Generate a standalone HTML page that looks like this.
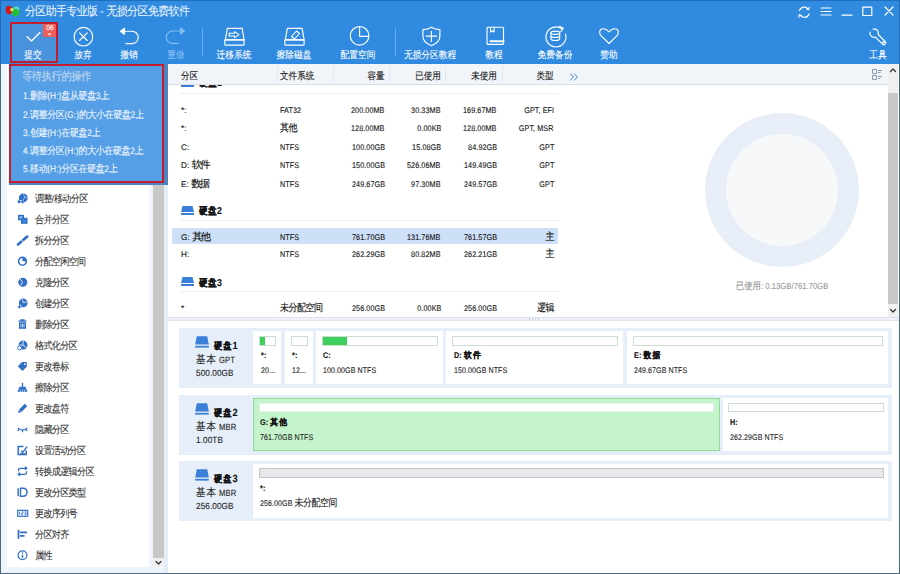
<!DOCTYPE html><html><head><meta charset="utf-8"><style>
*{margin:0;padding:0;box-sizing:border-box}
html,body{width:900px;height:574px;overflow:hidden;background:#e9f2fb;font-family:"Liberation Sans",sans-serif;position:relative}
.a{position:absolute}
.t{position:absolute;height:0;white-space:nowrap;line-height:0;text-rendering:geometricPrecision}
.t span{line-height:0}
:root{--k:1;--w:0.75;--s:1;--v:1}
.c{font-size:calc(var(--F) * var(--k));letter-spacing:calc(var(--A) - var(--F) * var(--k) * var(--w));-webkit-text-stroke:calc(var(--S) * var(--s)) currentColor;vertical-align:calc(var(--D) * var(--v))}
</style></head><body><div class="a" style="left:0px;top:0px;width:900px;height:64px;background:#2f8ae0;"></div>
<div class="a" style="left:0px;top:0px;width:900px;height:1px;background:#1f6fc0;"></div>
<svg class="a" style="left:0;top:0" width="24" height="20" viewBox="0 0 24 20"><ellipse cx="9" cy="10" rx="3.3" ry="4.2" fill="#d01818"/><ellipse cx="15.6" cy="11.4" rx="4" ry="5" fill="#22c03c"/><ellipse cx="16.3" cy="9" rx="3" ry="2.6" fill="#5fd8e8"/><ellipse cx="15.6" cy="12.5" rx="3.6" ry="3.8" fill="#22bf3c"/><circle cx="11.8" cy="9.6" r="1.7" fill="#e8e070"/></svg>
<div class="t" style="left:25px;transform-origin:0 0;top:10.48px;font-size:43.50px;color:#eaf3fd;transform:scale(0.3000,0.3333);"><span class="c" style="--F:43.50px;--A:34.50px;--S:0.90px;--D:-3.00px">分区助手专业版</span><span style="font-size:33.00px;letter-spacing:0.30px;-webkit-text-stroke:0.30px #eaf3fd"> - </span><span class="c" style="--F:43.50px;--A:34.50px;--S:0.90px;--D:-3.00px">无损分区免费软件</span></div>
<div class="a" style="left:9.5px;top:21.5px;width:48.8px;height:41px;background:#4893dc;"></div>
<div class="a" style="left:43px;top:24px;width:13px;height:13px;background:#ef5d5b;"></div>
<div class="t" style="left:-250.5px;width:600px;text-align:center;transform-origin:50% 0;top:26.24px;font-size:36.90px;color:#fff;transform:scale(0.3000,0.3333);"><span style="font-size:22.50px;letter-spacing:0.30px;-webkit-text-stroke:0.30px #fff">06</span></div>
<div class="t" style="left:-267px;width:600px;text-align:center;transform-origin:50% 0;top:53.91px;font-size:35.40px;color:#ffffff;transform:scale(0.2933,0.3333);"><span class="c" style="--F:35.40px;--A:29.66px;--S:1.05px;--D:-3.00px">提交</span></div>
<div class="t" style="left:-217.4px;width:600px;text-align:center;transform-origin:50% 0;top:53.91px;font-size:35.40px;color:#ffffff;transform:scale(0.2933,0.3333);"><span class="c" style="--F:35.40px;--A:29.66px;--S:1.05px;--D:-3.00px">放弃</span></div>
<div class="t" style="left:-171px;width:600px;text-align:center;transform-origin:50% 0;top:53.91px;font-size:35.40px;color:#ffffff;transform:scale(0.2933,0.3333);"><span class="c" style="--F:35.40px;--A:29.66px;--S:1.05px;--D:-3.00px">撤销</span></div>
<div class="t" style="left:-124.5px;width:600px;text-align:center;transform-origin:50% 0;top:53.91px;font-size:35.40px;color:#86bdf0;transform:scale(0.2933,0.3333);"><span class="c" style="--F:35.40px;--A:29.66px;--S:1.05px;--D:-3.00px">重做</span></div>
<div class="t" style="left:-66px;width:600px;text-align:center;transform-origin:50% 0;top:53.91px;font-size:35.40px;color:#ffffff;transform:scale(0.2933,0.3333);"><span class="c" style="--F:35.40px;--A:29.66px;--S:1.05px;--D:-3.00px">迁移系统</span></div>
<div class="t" style="left:-6px;width:600px;text-align:center;transform-origin:50% 0;top:53.91px;font-size:35.40px;color:#ffffff;transform:scale(0.2933,0.3333);"><span class="c" style="--F:35.40px;--A:29.66px;--S:1.05px;--D:-3.00px">擦除磁盘</span></div>
<div class="t" style="left:58px;width:600px;text-align:center;transform-origin:50% 0;top:53.91px;font-size:35.40px;color:#ffffff;transform:scale(0.2933,0.3333);"><span class="c" style="--F:35.40px;--A:29.66px;--S:1.05px;--D:-3.00px">配置空间</span></div>
<div class="t" style="left:130.39999999999998px;width:600px;text-align:center;transform-origin:50% 0;top:53.91px;font-size:35.40px;color:#ffffff;transform:scale(0.2933,0.3333);"><span class="c" style="--F:35.40px;--A:29.66px;--S:1.05px;--D:-3.00px">无损分区教程</span></div>
<div class="t" style="left:194px;width:600px;text-align:center;transform-origin:50% 0;top:53.91px;font-size:35.40px;color:#ffffff;transform:scale(0.2933,0.3333);"><span class="c" style="--F:35.40px;--A:29.66px;--S:1.05px;--D:-3.00px">教程</span></div>
<div class="t" style="left:254.89999999999998px;width:600px;text-align:center;transform-origin:50% 0;top:53.91px;font-size:35.40px;color:#ffffff;transform:scale(0.2933,0.3333);"><span class="c" style="--F:35.40px;--A:29.66px;--S:1.05px;--D:-3.00px">免费备份</span></div>
<div class="t" style="left:308.70000000000005px;width:600px;text-align:center;transform-origin:50% 0;top:53.91px;font-size:35.40px;color:#ffffff;transform:scale(0.2933,0.3333);"><span class="c" style="--F:35.40px;--A:29.66px;--S:1.05px;--D:-3.00px">赞助</span></div>
<div class="t" style="left:577.5px;width:600px;text-align:center;transform-origin:50% 0;top:53.91px;font-size:35.40px;color:#ffffff;transform:scale(0.2933,0.3333);"><span class="c" style="--F:35.40px;--A:29.66px;--S:1.05px;--D:-3.00px">工具</span></div>
<div class="a" style="left:202px;top:28px;width:1px;height:28px;background:#6aaeea;"></div>
<div class="a" style="left:395px;top:28px;width:1px;height:28px;background:#6aaeea;"></div>
<div class="a" style="left:1px;top:64px;width:163px;height:509px;background:#eef5fc;"></div>
<div class="a" style="left:7px;top:64px;width:142px;height:503px;background:#ffffff;"></div>
<div class="a" style="left:152px;top:64px;width:12px;height:503px;background:#f0f0f0;"></div>
<div class="a" style="left:153px;top:184px;width:11px;height:374px;background:#c8c8c8;"></div>
<div class="a" style="left:164px;top:64px;width:4px;height:509px;background:#e4eef9;"></div>
<div class="t" style="left:35px;transform-origin:0 0;top:197.90px;font-size:37.20px;color:#333;transform:scale(0.2933,0.3333);"><span class="c" style="--F:37.20px;--A:28.64px;--S:0.90px;--D:-0.90px">调整</span><span style="font-size:25.50px;letter-spacing:0.30px;-webkit-text-stroke:0.30px #333">/</span><span class="c" style="--F:37.20px;--A:28.64px;--S:0.90px;--D:-0.90px">移动分区</span></div>
<div class="t" style="left:35px;transform-origin:0 0;top:218.90px;font-size:37.20px;color:#333;transform:scale(0.2933,0.3333);"><span class="c" style="--F:37.20px;--A:28.64px;--S:0.90px;--D:-0.90px">合并分区</span></div>
<div class="t" style="left:35px;transform-origin:0 0;top:239.90px;font-size:37.20px;color:#333;transform:scale(0.2933,0.3333);"><span class="c" style="--F:37.20px;--A:28.64px;--S:0.90px;--D:-0.90px">拆分分区</span></div>
<div class="t" style="left:35px;transform-origin:0 0;top:260.90px;font-size:37.20px;color:#333;transform:scale(0.2933,0.3333);"><span class="c" style="--F:37.20px;--A:28.64px;--S:0.90px;--D:-0.90px">分配空闲空间</span></div>
<div class="t" style="left:35px;transform-origin:0 0;top:281.90px;font-size:37.20px;color:#333;transform:scale(0.2933,0.3333);"><span class="c" style="--F:37.20px;--A:28.64px;--S:0.90px;--D:-0.90px">克隆分区</span></div>
<div class="t" style="left:35px;transform-origin:0 0;top:302.90px;font-size:37.20px;color:#333;transform:scale(0.2933,0.3333);"><span class="c" style="--F:37.20px;--A:28.64px;--S:0.90px;--D:-0.90px">创建分区</span></div>
<div class="t" style="left:35px;transform-origin:0 0;top:323.90px;font-size:37.20px;color:#333;transform:scale(0.2933,0.3333);"><span class="c" style="--F:37.20px;--A:28.64px;--S:0.90px;--D:-0.90px">删除分区</span></div>
<div class="t" style="left:35px;transform-origin:0 0;top:344.90px;font-size:37.20px;color:#333;transform:scale(0.2933,0.3333);"><span class="c" style="--F:37.20px;--A:28.64px;--S:0.90px;--D:-0.90px">格式化分区</span></div>
<div class="t" style="left:35px;transform-origin:0 0;top:365.90px;font-size:37.20px;color:#333;transform:scale(0.2933,0.3333);"><span class="c" style="--F:37.20px;--A:28.64px;--S:0.90px;--D:-0.90px">更改卷标</span></div>
<div class="t" style="left:35px;transform-origin:0 0;top:386.90px;font-size:37.20px;color:#333;transform:scale(0.2933,0.3333);"><span class="c" style="--F:37.20px;--A:28.64px;--S:0.90px;--D:-0.90px">擦除分区</span></div>
<div class="t" style="left:35px;transform-origin:0 0;top:407.90px;font-size:37.20px;color:#333;transform:scale(0.2933,0.3333);"><span class="c" style="--F:37.20px;--A:28.64px;--S:0.90px;--D:-0.90px">更改盘符</span></div>
<div class="t" style="left:35px;transform-origin:0 0;top:428.90px;font-size:37.20px;color:#333;transform:scale(0.2933,0.3333);"><span class="c" style="--F:37.20px;--A:28.64px;--S:0.90px;--D:-0.90px">隐藏分区</span></div>
<div class="t" style="left:35px;transform-origin:0 0;top:449.90px;font-size:37.20px;color:#333;transform:scale(0.2933,0.3333);"><span class="c" style="--F:37.20px;--A:28.64px;--S:0.90px;--D:-0.90px">设置活动分区</span></div>
<div class="t" style="left:35px;transform-origin:0 0;top:470.90px;font-size:37.20px;color:#333;transform:scale(0.2933,0.3333);"><span class="c" style="--F:37.20px;--A:28.64px;--S:0.90px;--D:-0.90px">转换成逻辑分区</span></div>
<div class="t" style="left:35px;transform-origin:0 0;top:491.90px;font-size:37.20px;color:#333;transform:scale(0.2933,0.3333);"><span class="c" style="--F:37.20px;--A:28.64px;--S:0.90px;--D:-0.90px">更改分区类型</span></div>
<div class="t" style="left:35px;transform-origin:0 0;top:512.90px;font-size:37.20px;color:#333;transform:scale(0.2933,0.3333);"><span class="c" style="--F:37.20px;--A:28.64px;--S:0.90px;--D:-0.90px">更改序列号</span></div>
<div class="t" style="left:35px;transform-origin:0 0;top:533.90px;font-size:37.20px;color:#333;transform:scale(0.2933,0.3333);"><span class="c" style="--F:37.20px;--A:28.64px;--S:0.90px;--D:-0.90px">分区对齐</span></div>
<div class="t" style="left:35px;transform-origin:0 0;top:554.90px;font-size:37.20px;color:#333;transform:scale(0.2933,0.3333);"><span class="c" style="--F:37.20px;--A:28.64px;--S:0.90px;--D:-0.90px">属性</span></div>
<div class="a" style="left:168px;top:64px;width:731px;height:509px;background:#ffffff;"></div>
<div class="a" style="left:168px;top:64px;width:720px;height:20px;background:#f1f5fa;"></div>
<div class="a" style="left:168px;top:84px;width:720px;height:1px;background:#d8dfe8;"></div>
<div class="a" style="left:277px;top:66px;width:1px;height:17px;background:#e2e8f0;"></div>
<div class="a" style="left:333px;top:66px;width:1px;height:17px;background:#e2e8f0;"></div>
<div class="a" style="left:389px;top:66px;width:1px;height:17px;background:#e2e8f0;"></div>
<div class="a" style="left:445px;top:66px;width:1px;height:17px;background:#e2e8f0;"></div>
<div class="a" style="left:502px;top:66px;width:1px;height:17px;background:#e2e8f0;"></div>
<div class="t" style="left:181px;transform-origin:0 0;top:74.58px;font-size:34.80px;color:#222;transform:scale(0.2933,0.3333);"><span class="c" style="--F:34.80px;--A:29.32px;--S:1.35px;--D:0.00px">分区</span></div>
<div class="t" style="left:280px;transform-origin:0 0;top:74.58px;font-size:34.80px;color:#222;transform:scale(0.2933,0.3333);"><span class="c" style="--F:34.80px;--A:29.32px;--S:1.35px;--D:0.00px">文件系统</span></div>
<div class="t" style="right:515px;text-align:right;transform-origin:100% 0;top:74.58px;font-size:34.80px;color:#222;transform:scale(0.2933,0.3333);"><span class="c" style="--F:34.80px;--A:29.32px;--S:1.35px;--D:0.00px">容量</span></div>
<div class="t" style="right:459px;text-align:right;transform-origin:100% 0;top:74.58px;font-size:34.80px;color:#222;transform:scale(0.2933,0.3333);"><span class="c" style="--F:34.80px;--A:29.32px;--S:1.35px;--D:0.00px">已使用</span></div>
<div class="t" style="right:403px;text-align:right;transform-origin:100% 0;top:74.58px;font-size:34.80px;color:#222;transform:scale(0.2933,0.3333);"><span class="c" style="--F:34.80px;--A:29.32px;--S:1.35px;--D:0.00px">未使用</span></div>
<div class="t" style="right:346px;text-align:right;transform-origin:100% 0;top:74.58px;font-size:34.80px;color:#222;transform:scale(0.2933,0.3333);"><span class="c" style="--F:34.80px;--A:29.32px;--S:1.35px;--D:0.00px">类型</span></div>
<div class="a" style="left:888px;top:64px;width:10px;height:253px;background:#f0f0f0;"></div>
<div class="a" style="left:888px;top:93px;width:10px;height:211px;background:#c8c8c8;"></div>
<div class="a" style="left:168px;top:85px;width:720px;height:232px;overflow:hidden">
<div class="a" style="left:4px;top:143px;width:386px;height:16px;background:#cde0f7;"></div>
<div class="t" style="left:13px;transform-origin:0 0;top:23.84px;font-size:36.90px;color:#111;transform:scale(0.3333,0.3333);"><span style="font-size:24.60px;letter-spacing:0.30px;-webkit-text-stroke:0.30px #111">*:</span></div>
<div class="t" style="left:112px;transform-origin:0 0;top:23.84px;font-size:36.90px;color:#111;transform:scale(0.2933,0.3333);"><span style="font-size:24.60px;letter-spacing:0.30px;-webkit-text-stroke:0.30px #111">FAT32</span></div>
<div class="t" style="right:503px;text-align:right;transform-origin:100% 0;top:23.84px;font-size:36.90px;color:#111;transform:scale(0.2933,0.3333);"><span style="font-size:24.60px;letter-spacing:0.30px;-webkit-text-stroke:0.30px #111">200.00MB</span></div>
<div class="t" style="right:447px;text-align:right;transform-origin:100% 0;top:23.84px;font-size:36.90px;color:#111;transform:scale(0.2933,0.3333);"><span style="font-size:24.60px;letter-spacing:0.30px;-webkit-text-stroke:0.30px #111">30.33MB</span></div>
<div class="t" style="right:391px;text-align:right;transform-origin:100% 0;top:23.84px;font-size:36.90px;color:#111;transform:scale(0.2933,0.3333);"><span style="font-size:24.60px;letter-spacing:0.30px;-webkit-text-stroke:0.30px #111">169.67MB</span></div>
<div class="t" style="right:334px;text-align:right;transform-origin:100% 0;top:23.84px;font-size:36.90px;color:#111;transform:scale(0.2933,0.3333);"><span style="font-size:24.60px;letter-spacing:0.30px;-webkit-text-stroke:0.30px #111">GPT, EFI</span></div>
<div class="t" style="left:13px;transform-origin:0 0;top:42.24px;font-size:36.90px;color:#111;transform:scale(0.3333,0.3333);"><span style="font-size:24.60px;letter-spacing:0.30px;-webkit-text-stroke:0.30px #111">*:</span></div>
<div class="t" style="left:112px;transform-origin:0 0;top:42.24px;font-size:36.90px;color:#111;transform:scale(0.2933,0.3333);"><span class="c" style="--F:36.90px;--A:28.98px;--S:1.35px;--D:-6.90px">其他</span></div>
<div class="t" style="right:503px;text-align:right;transform-origin:100% 0;top:42.24px;font-size:36.90px;color:#111;transform:scale(0.2933,0.3333);"><span style="font-size:24.60px;letter-spacing:0.30px;-webkit-text-stroke:0.30px #111">128.00MB</span></div>
<div class="t" style="right:447px;text-align:right;transform-origin:100% 0;top:42.24px;font-size:36.90px;color:#111;transform:scale(0.2933,0.3333);"><span style="font-size:24.60px;letter-spacing:0.30px;-webkit-text-stroke:0.30px #111">0.00KB</span></div>
<div class="t" style="right:391px;text-align:right;transform-origin:100% 0;top:42.24px;font-size:36.90px;color:#111;transform:scale(0.2933,0.3333);"><span style="font-size:24.60px;letter-spacing:0.30px;-webkit-text-stroke:0.30px #111">128.00MB</span></div>
<div class="t" style="right:334px;text-align:right;transform-origin:100% 0;top:42.24px;font-size:36.90px;color:#111;transform:scale(0.2933,0.3333);"><span style="font-size:24.60px;letter-spacing:0.30px;-webkit-text-stroke:0.30px #111">GPT, MSR</span></div>
<div class="t" style="left:13px;transform-origin:0 0;top:60.74px;font-size:36.90px;color:#111;transform:scale(0.3333,0.3333);"><span style="font-size:24.60px;letter-spacing:0.30px;-webkit-text-stroke:0.30px #111">C:</span></div>
<div class="t" style="left:112px;transform-origin:0 0;top:60.74px;font-size:36.90px;color:#111;transform:scale(0.2933,0.3333);"><span style="font-size:24.60px;letter-spacing:0.30px;-webkit-text-stroke:0.30px #111">NTFS</span></div>
<div class="t" style="right:503px;text-align:right;transform-origin:100% 0;top:60.74px;font-size:36.90px;color:#111;transform:scale(0.2933,0.3333);"><span style="font-size:24.60px;letter-spacing:0.30px;-webkit-text-stroke:0.30px #111">100.00GB</span></div>
<div class="t" style="right:447px;text-align:right;transform-origin:100% 0;top:60.74px;font-size:36.90px;color:#111;transform:scale(0.2933,0.3333);"><span style="font-size:24.60px;letter-spacing:0.30px;-webkit-text-stroke:0.30px #111">15.08GB</span></div>
<div class="t" style="right:391px;text-align:right;transform-origin:100% 0;top:60.74px;font-size:36.90px;color:#111;transform:scale(0.2933,0.3333);"><span style="font-size:24.60px;letter-spacing:0.30px;-webkit-text-stroke:0.30px #111">84.92GB</span></div>
<div class="t" style="right:334px;text-align:right;transform-origin:100% 0;top:60.74px;font-size:36.90px;color:#111;transform:scale(0.2933,0.3333);"><span style="font-size:24.60px;letter-spacing:0.30px;-webkit-text-stroke:0.30px #111">GPT</span></div>
<div class="t" style="left:13px;transform-origin:0 0;top:79.14px;font-size:36.90px;color:#111;transform:scale(0.3333,0.3333);"><span style="font-size:24.60px;letter-spacing:0.30px;-webkit-text-stroke:0.30px #111">D: </span><span class="c" style="--F:36.90px;--A:25.50px;--S:1.35px;--D:-6.90px">软件</span></div>
<div class="t" style="left:112px;transform-origin:0 0;top:79.14px;font-size:36.90px;color:#111;transform:scale(0.2933,0.3333);"><span style="font-size:24.60px;letter-spacing:0.30px;-webkit-text-stroke:0.30px #111">NTFS</span></div>
<div class="t" style="right:503px;text-align:right;transform-origin:100% 0;top:79.14px;font-size:36.90px;color:#111;transform:scale(0.2933,0.3333);"><span style="font-size:24.60px;letter-spacing:0.30px;-webkit-text-stroke:0.30px #111">150.00GB</span></div>
<div class="t" style="right:447px;text-align:right;transform-origin:100% 0;top:79.14px;font-size:36.90px;color:#111;transform:scale(0.2933,0.3333);"><span style="font-size:24.60px;letter-spacing:0.30px;-webkit-text-stroke:0.30px #111">526.06MB</span></div>
<div class="t" style="right:391px;text-align:right;transform-origin:100% 0;top:79.14px;font-size:36.90px;color:#111;transform:scale(0.2933,0.3333);"><span style="font-size:24.60px;letter-spacing:0.30px;-webkit-text-stroke:0.30px #111">149.49GB</span></div>
<div class="t" style="right:334px;text-align:right;transform-origin:100% 0;top:79.14px;font-size:36.90px;color:#111;transform:scale(0.2933,0.3333);"><span style="font-size:24.60px;letter-spacing:0.30px;-webkit-text-stroke:0.30px #111">GPT</span></div>
<div class="t" style="left:13px;transform-origin:0 0;top:97.64px;font-size:36.90px;color:#111;transform:scale(0.3333,0.3333);"><span style="font-size:24.60px;letter-spacing:0.30px;-webkit-text-stroke:0.30px #111">E: </span><span class="c" style="--F:36.90px;--A:25.50px;--S:1.35px;--D:-6.90px">数据</span></div>
<div class="t" style="left:112px;transform-origin:0 0;top:97.64px;font-size:36.90px;color:#111;transform:scale(0.2933,0.3333);"><span style="font-size:24.60px;letter-spacing:0.30px;-webkit-text-stroke:0.30px #111">NTFS</span></div>
<div class="t" style="right:503px;text-align:right;transform-origin:100% 0;top:97.64px;font-size:36.90px;color:#111;transform:scale(0.2933,0.3333);"><span style="font-size:24.60px;letter-spacing:0.30px;-webkit-text-stroke:0.30px #111">249.67GB</span></div>
<div class="t" style="right:447px;text-align:right;transform-origin:100% 0;top:97.64px;font-size:36.90px;color:#111;transform:scale(0.2933,0.3333);"><span style="font-size:24.60px;letter-spacing:0.30px;-webkit-text-stroke:0.30px #111">97.30MB</span></div>
<div class="t" style="right:391px;text-align:right;transform-origin:100% 0;top:97.64px;font-size:36.90px;color:#111;transform:scale(0.2933,0.3333);"><span style="font-size:24.60px;letter-spacing:0.30px;-webkit-text-stroke:0.30px #111">249.57GB</span></div>
<div class="t" style="right:334px;text-align:right;transform-origin:100% 0;top:97.64px;font-size:36.90px;color:#111;transform:scale(0.2933,0.3333);"><span style="font-size:24.60px;letter-spacing:0.30px;-webkit-text-stroke:0.30px #111">GPT</span></div>
<div class="t" style="left:13px;transform-origin:0 0;top:150.74px;font-size:36.90px;color:#111;transform:scale(0.3333,0.3333);"><span style="font-size:24.60px;letter-spacing:0.30px;-webkit-text-stroke:0.30px #111">G: </span><span class="c" style="--F:36.90px;--A:25.50px;--S:1.35px;--D:-6.90px">其他</span></div>
<div class="t" style="left:112px;transform-origin:0 0;top:150.74px;font-size:36.90px;color:#111;transform:scale(0.2933,0.3333);"><span style="font-size:24.60px;letter-spacing:0.30px;-webkit-text-stroke:0.30px #111">NTFS</span></div>
<div class="t" style="right:503px;text-align:right;transform-origin:100% 0;top:150.74px;font-size:36.90px;color:#111;transform:scale(0.2933,0.3333);"><span style="font-size:24.60px;letter-spacing:0.30px;-webkit-text-stroke:0.30px #111">761.70GB</span></div>
<div class="t" style="right:447px;text-align:right;transform-origin:100% 0;top:150.74px;font-size:36.90px;color:#111;transform:scale(0.2933,0.3333);"><span style="font-size:24.60px;letter-spacing:0.30px;-webkit-text-stroke:0.30px #111">131.76MB</span></div>
<div class="t" style="right:391px;text-align:right;transform-origin:100% 0;top:150.74px;font-size:36.90px;color:#111;transform:scale(0.2933,0.3333);"><span style="font-size:24.60px;letter-spacing:0.30px;-webkit-text-stroke:0.30px #111">761.57GB</span></div>
<div class="t" style="right:334px;text-align:right;transform-origin:100% 0;top:150.74px;font-size:36.90px;color:#111;transform:scale(0.2933,0.3333);"><span class="c" style="--F:36.90px;--A:28.98px;--S:1.35px;--D:-6.90px">主</span></div>
<div class="t" style="left:13px;transform-origin:0 0;top:168.24px;font-size:36.90px;color:#111;transform:scale(0.3333,0.3333);"><span style="font-size:24.60px;letter-spacing:0.30px;-webkit-text-stroke:0.30px #111">H:</span></div>
<div class="t" style="left:112px;transform-origin:0 0;top:168.24px;font-size:36.90px;color:#111;transform:scale(0.2933,0.3333);"><span style="font-size:24.60px;letter-spacing:0.30px;-webkit-text-stroke:0.30px #111">NTFS</span></div>
<div class="t" style="right:503px;text-align:right;transform-origin:100% 0;top:168.24px;font-size:36.90px;color:#111;transform:scale(0.2933,0.3333);"><span style="font-size:24.60px;letter-spacing:0.30px;-webkit-text-stroke:0.30px #111">262.29GB</span></div>
<div class="t" style="right:447px;text-align:right;transform-origin:100% 0;top:168.24px;font-size:36.90px;color:#111;transform:scale(0.2933,0.3333);"><span style="font-size:24.60px;letter-spacing:0.30px;-webkit-text-stroke:0.30px #111">80.82MB</span></div>
<div class="t" style="right:391px;text-align:right;transform-origin:100% 0;top:168.24px;font-size:36.90px;color:#111;transform:scale(0.2933,0.3333);"><span style="font-size:24.60px;letter-spacing:0.30px;-webkit-text-stroke:0.30px #111">262.21GB</span></div>
<div class="t" style="right:334px;text-align:right;transform-origin:100% 0;top:168.24px;font-size:36.90px;color:#111;transform:scale(0.2933,0.3333);"><span class="c" style="--F:36.90px;--A:28.98px;--S:1.35px;--D:-6.90px">主</span></div>
<div class="t" style="left:13px;transform-origin:0 0;top:222.24px;font-size:36.90px;color:#111;transform:scale(0.3333,0.3333);"><span style="font-size:24.60px;letter-spacing:0.30px;-webkit-text-stroke:0.30px #111">*</span></div>
<div class="t" style="left:112px;transform-origin:0 0;top:222.24px;font-size:36.90px;color:#111;transform:scale(0.2933,0.3333);"><span class="c" style="--F:36.90px;--A:28.98px;--S:1.35px;--D:-6.90px">未分配空间</span></div>
<div class="t" style="right:503px;text-align:right;transform-origin:100% 0;top:222.24px;font-size:36.90px;color:#111;transform:scale(0.2933,0.3333);"><span style="font-size:24.60px;letter-spacing:0.30px;-webkit-text-stroke:0.30px #111">256.00GB</span></div>
<div class="t" style="right:447px;text-align:right;transform-origin:100% 0;top:222.24px;font-size:36.90px;color:#111;transform:scale(0.2933,0.3333);"><span style="font-size:24.60px;letter-spacing:0.30px;-webkit-text-stroke:0.30px #111">0.00KB</span></div>
<div class="t" style="right:391px;text-align:right;transform-origin:100% 0;top:222.24px;font-size:36.90px;color:#111;transform:scale(0.2933,0.3333);"><span style="font-size:24.60px;letter-spacing:0.30px;-webkit-text-stroke:0.30px #111">256.00GB</span></div>
<div class="t" style="right:334px;text-align:right;transform-origin:100% 0;top:222.24px;font-size:36.90px;color:#111;transform:scale(0.2933,0.3333);"><span class="c" style="--F:36.90px;--A:28.98px;--S:1.35px;--D:-6.90px">逻辑</span></div>
<svg class="a" style="left:13px;top:-7.5px" width="13" height="9" viewBox="0 0 13 9"><path d="M1.5,0 h10 l1.5,6 h-13 z" fill="#3b80d8"/><rect x="0" y="7" width="13" height="2" fill="#3b80d8"/></svg>
<div class="t" style="left:31px;transform-origin:0 0;top:-2.79px;font-size:35.40px;color:#111;transform:scale(0.2933,0.3333);font-weight:bold;"><span class="c" style="--F:35.40px;--A:30.68px;--S:3.00px;--D:-3.00px">硬盘</span><span style="font-size:30.00px;letter-spacing:0.30px;-webkit-text-stroke:0.30px #111">1</span></div>
<svg class="a" style="left:13px;top:120.5px" width="13" height="9" viewBox="0 0 13 9"><path d="M1.5,0 h10 l1.5,6 h-13 z" fill="#3b80d8"/><rect x="0" y="7" width="13" height="2" fill="#3b80d8"/></svg>
<div class="t" style="left:31px;transform-origin:0 0;top:125.21px;font-size:35.40px;color:#111;transform:scale(0.2933,0.3333);font-weight:bold;"><span class="c" style="--F:35.40px;--A:30.68px;--S:3.00px;--D:-3.00px">硬盘</span><span style="font-size:30.00px;letter-spacing:0.30px;-webkit-text-stroke:0.30px #111">2</span></div>
<svg class="a" style="left:13px;top:192.0px" width="13" height="9" viewBox="0 0 13 9"><path d="M1.5,0 h10 l1.5,6 h-13 z" fill="#3b80d8"/><rect x="0" y="7" width="13" height="2" fill="#3b80d8"/></svg>
<div class="t" style="left:31px;transform-origin:0 0;top:196.71px;font-size:35.40px;color:#111;transform:scale(0.2933,0.3333);font-weight:bold;"><span class="c" style="--F:35.40px;--A:30.68px;--S:3.00px;--D:-3.00px">硬盘</span><span style="font-size:30.00px;letter-spacing:0.30px;-webkit-text-stroke:0.30px #111">3</span></div>
<div class="a" style="left:12px;top:8px;width:378px;height:1px;background:#eceef2;"></div>
<div class="a" style="left:12px;top:135px;width:378px;height:1px;background:#eceef2;"></div>
<div class="a" style="left:12px;top:206px;width:378px;height:1px;background:#eceef2;"></div>
</div>
<div class="a" style="left:705px;top:113px;width:154px;height:154px;border-radius:50%;background:#e8eef8"></div>
<div class="a" style="left:726px;top:134px;width:112px;height:112px;border-radius:50%;background:#f7f8fa"></div>
<div class="t" style="left:736px;transform-origin:0 0;top:285.02px;font-size:34.50px;color:#999;transform:scale(0.2867,0.3333);"><span class="c" style="--F:34.50px;--A:28.95px;--S:1.35px;--D:-3.00px">已使用</span><span style="font-size:26.40px;letter-spacing:0.30px;-webkit-text-stroke:0.30px #999">: 0.13GB/761.70GB</span></div>
<div class="a" style="left:168px;top:317px;width:731px;height:4px;background:#eef1f5;border-top:1px solid #dde3ea;border-bottom:1px solid #dde3ea"></div>
<div class="a" style="left:179px;top:328px;width:713px;height:60px;background:#e6eef9;"></div>
<div class="a" style="left:179px;top:395px;width:713px;height:60px;background:#e6eef9;"></div>
<div class="a" style="left:179px;top:461px;width:713px;height:60px;background:#e6eef9;"></div>
<div class="a" style="left:253px;top:331px;width:28px;height:53px;background:#fff;"></div>
<div class="a" style="left:259px;top:336px;width:17px;height:10px;background:#fff;border:1px solid #cddfcf"></div>
<div class="a" style="left:260px;top:337px;width:5px;height:8px;background:#3fcf5e;"></div>
<div class="a" style="left:285px;top:331px;width:28px;height:53px;background:#fff;"></div>
<div class="a" style="left:291px;top:336px;width:17px;height:10px;background:#fff;border:1px solid #cddfcf"></div>
<div class="a" style="left:316px;top:331px;width:127px;height:53px;background:#fff;"></div>
<div class="a" style="left:322px;top:336px;width:116px;height:10px;background:#fff;border:1px solid #cddfcf"></div>
<div class="a" style="left:323px;top:337px;width:24px;height:8px;background:#3fcf5e;"></div>
<div class="a" style="left:446px;top:331px;width:177px;height:53px;background:#fff;"></div>
<div class="a" style="left:452px;top:336px;width:166px;height:10px;background:#fff;border:1px solid #cddfcf"></div>
<div class="a" style="left:627px;top:331px;width:261px;height:53px;background:#fff;"></div>
<div class="a" style="left:633px;top:336px;width:250px;height:10px;background:#fff;border:1px solid #cddfcf"></div>
<div class="t" style="left:260.5px;transform-origin:0 0;top:353.76px;font-size:31.50px;color:#111;transform:scale(0.2933,0.3333);font-weight:bold;"><span style="font-size:24.60px;letter-spacing:0.30px;-webkit-text-stroke:0.30px #111">*:</span></div>
<div class="t" style="left:260.5px;transform-origin:0 0;top:368.54px;font-size:36.90px;color:#222;transform:scale(0.2867,0.3333);"><span style="font-size:24.60px;letter-spacing:0.30px;-webkit-text-stroke:0.30px #222">20...</span></div>
<div class="t" style="left:291.5px;transform-origin:0 0;top:353.76px;font-size:31.50px;color:#111;transform:scale(0.2933,0.3333);font-weight:bold;"><span style="font-size:24.60px;letter-spacing:0.30px;-webkit-text-stroke:0.30px #111">*:</span></div>
<div class="t" style="left:291.5px;transform-origin:0 0;top:368.54px;font-size:36.90px;color:#222;transform:scale(0.2867,0.3333);"><span style="font-size:24.60px;letter-spacing:0.30px;-webkit-text-stroke:0.30px #222">12...</span></div>
<div class="t" style="left:323px;transform-origin:0 0;top:353.76px;font-size:31.50px;color:#111;transform:scale(0.2933,0.3333);font-weight:bold;"><span style="font-size:24.60px;letter-spacing:0.30px;-webkit-text-stroke:0.30px #111">C:</span></div>
<div class="t" style="left:323px;transform-origin:0 0;top:368.54px;font-size:36.90px;color:#222;transform:scale(0.2867,0.3333);"><span style="font-size:24.60px;letter-spacing:0.30px;-webkit-text-stroke:0.30px #222">100.00GB NTFS</span></div>
<div class="t" style="left:453.7px;transform-origin:0 0;top:353.76px;font-size:31.50px;color:#111;transform:scale(0.2933,0.3333);font-weight:bold;"><span style="font-size:24.60px;letter-spacing:0.30px;-webkit-text-stroke:0.30px #111">D: </span><span class="c" style="--F:31.50px;--A:30.68px;--S:3.00px;--D:-3.60px">软件</span></div>
<div class="t" style="left:453.7px;transform-origin:0 0;top:368.54px;font-size:36.90px;color:#222;transform:scale(0.2867,0.3333);"><span style="font-size:24.60px;letter-spacing:0.30px;-webkit-text-stroke:0.30px #222">150.00GB NTFS</span></div>
<div class="t" style="left:634px;transform-origin:0 0;top:353.76px;font-size:31.50px;color:#111;transform:scale(0.2933,0.3333);font-weight:bold;"><span style="font-size:24.60px;letter-spacing:0.30px;-webkit-text-stroke:0.30px #111">E: </span><span class="c" style="--F:31.50px;--A:30.68px;--S:3.00px;--D:-3.60px">数据</span></div>
<div class="t" style="left:634px;transform-origin:0 0;top:368.54px;font-size:36.90px;color:#222;transform:scale(0.2867,0.3333);"><span style="font-size:24.60px;letter-spacing:0.30px;-webkit-text-stroke:0.30px #222">249.67GB NTFS</span></div>
<div class="a" style="left:253px;top:398px;width:467px;height:53px;background:#c5f3cb;border:1px solid #8fd99b;"></div>
<div class="a" style="left:259px;top:403px;width:455px;height:9px;background:#fff;border:1px solid #e4f4e6"></div>
<div class="a" style="left:723px;top:398px;width:165px;height:53px;background:#fff;"></div>
<div class="a" style="left:728px;top:403px;width:156px;height:9px;background:#fff;border:1px solid #cddfcf"></div>
<div class="t" style="left:260px;transform-origin:0 0;top:420.76px;font-size:31.50px;color:#111;transform:scale(0.2933,0.3333);font-weight:bold;"><span style="font-size:24.60px;letter-spacing:0.30px;-webkit-text-stroke:0.30px #111">G: </span><span class="c" style="--F:31.50px;--A:30.68px;--S:3.00px;--D:-3.60px">其他</span></div>
<div class="t" style="left:260px;transform-origin:0 0;top:435.54px;font-size:36.90px;color:#222;transform:scale(0.2867,0.3333);"><span style="font-size:24.60px;letter-spacing:0.30px;-webkit-text-stroke:0.30px #222">761.70GB NTFS</span></div>
<div class="t" style="left:730px;transform-origin:0 0;top:420.76px;font-size:31.50px;color:#111;transform:scale(0.2933,0.3333);font-weight:bold;"><span style="font-size:24.60px;letter-spacing:0.30px;-webkit-text-stroke:0.30px #111">H:</span></div>
<div class="t" style="left:730px;transform-origin:0 0;top:435.54px;font-size:36.90px;color:#222;transform:scale(0.2867,0.3333);"><span style="font-size:24.60px;letter-spacing:0.30px;-webkit-text-stroke:0.30px #222">262.29GB NTFS</span></div>
<div class="a" style="left:253px;top:464px;width:635px;height:54px;background:#fff;"></div>
<div class="a" style="left:259px;top:468px;width:625px;height:10px;background:#e6e8eb;border:1px solid #c3c6ca"></div>
<div class="t" style="left:260px;transform-origin:0 0;top:486.76px;font-size:31.50px;color:#111;transform:scale(0.2933,0.3333);font-weight:bold;"><span style="font-size:24.60px;letter-spacing:0.30px;-webkit-text-stroke:0.30px #111">*:</span></div>
<div class="t" style="left:260px;transform-origin:0 0;top:501.54px;font-size:36.90px;color:#222;transform:scale(0.2867,0.3333);"><span style="font-size:24.60px;letter-spacing:0.30px;-webkit-text-stroke:0.30px #222">256.00GB </span><span class="c" style="--F:36.90px;--A:29.65px;--S:1.35px;--D:-3.00px">未分配空间</span></div>
<svg class="a" style="left:195px;top:336px" width="14" height="12" viewBox="0 0 14 12"><path d="M1.8,0.3 h10.4 l1.6,8.2 h-13.6 z" fill="#3b80d8"/><rect x="0.2" y="9.8" width="13.6" height="1.8" fill="#3b80d8"/></svg>
<div class="t" style="left:214.4px;transform-origin:0 0;top:344.92px;font-size:33.60px;color:#111;transform:scale(0.2933,0.3333);font-weight:bold;"><span class="c" style="--F:33.60px;--A:31.70px;--S:3.15px;--D:-0.90px">硬盘</span><span style="font-size:31.50px;letter-spacing:0.30px;-webkit-text-stroke:0.30px #111">1</span></div>
<div class="t" style="left:196px;transform-origin:0 0;top:359.33px;font-size:39.60px;color:#222;transform:scale(0.2833,0.3333);"><span class="c" style="--F:39.60px;--A:36.71px;--S:1.35px;--D:0.00px">基本</span><span style="font-size:27.00px;letter-spacing:0.30px;-webkit-text-stroke:0.30px #222"> GPT</span></div>
<div class="t" style="left:196px;transform-origin:0 0;top:371.54px;font-size:36.90px;color:#222;transform:scale(0.3033,0.3333);"><span style="font-size:27.00px;letter-spacing:0.30px;-webkit-text-stroke:0.30px #222">500.00GB</span></div>
<svg class="a" style="left:195px;top:403px" width="14" height="12" viewBox="0 0 14 12"><path d="M1.8,0.3 h10.4 l1.6,8.2 h-13.6 z" fill="#3b80d8"/><rect x="0.2" y="9.8" width="13.6" height="1.8" fill="#3b80d8"/></svg>
<div class="t" style="left:214.4px;transform-origin:0 0;top:411.92px;font-size:33.60px;color:#111;transform:scale(0.2933,0.3333);font-weight:bold;"><span class="c" style="--F:33.60px;--A:31.70px;--S:3.15px;--D:-0.90px">硬盘</span><span style="font-size:31.50px;letter-spacing:0.30px;-webkit-text-stroke:0.30px #111">2</span></div>
<div class="t" style="left:196px;transform-origin:0 0;top:426.33px;font-size:39.60px;color:#222;transform:scale(0.2833,0.3333);"><span class="c" style="--F:39.60px;--A:36.71px;--S:1.35px;--D:0.00px">基本</span><span style="font-size:27.00px;letter-spacing:0.30px;-webkit-text-stroke:0.30px #222"> MBR</span></div>
<div class="t" style="left:196px;transform-origin:0 0;top:438.54px;font-size:36.90px;color:#222;transform:scale(0.3033,0.3333);"><span style="font-size:27.00px;letter-spacing:0.30px;-webkit-text-stroke:0.30px #222">1.00TB</span></div>
<svg class="a" style="left:195px;top:469px" width="14" height="12" viewBox="0 0 14 12"><path d="M1.8,0.3 h10.4 l1.6,8.2 h-13.6 z" fill="#3b80d8"/><rect x="0.2" y="9.8" width="13.6" height="1.8" fill="#3b80d8"/></svg>
<div class="t" style="left:214.4px;transform-origin:0 0;top:477.92px;font-size:33.60px;color:#111;transform:scale(0.2933,0.3333);font-weight:bold;"><span class="c" style="--F:33.60px;--A:31.70px;--S:3.15px;--D:-0.90px">硬盘</span><span style="font-size:31.50px;letter-spacing:0.30px;-webkit-text-stroke:0.30px #111">3</span></div>
<div class="t" style="left:196px;transform-origin:0 0;top:492.33px;font-size:39.60px;color:#222;transform:scale(0.2833,0.3333);"><span class="c" style="--F:39.60px;--A:36.71px;--S:1.35px;--D:0.00px">基本</span><span style="font-size:27.00px;letter-spacing:0.30px;-webkit-text-stroke:0.30px #222"> MBR</span></div>
<div class="t" style="left:196px;transform-origin:0 0;top:504.54px;font-size:36.90px;color:#222;transform:scale(0.3033,0.3333);"><span style="font-size:27.00px;letter-spacing:0.30px;-webkit-text-stroke:0.30px #222">256.00GB</span></div>
<div class="a" style="left:9px;top:64px;width:159px;height:121px;background:#4f83bd;"></div>
<div class="a" style="left:9px;top:64px;width:155px;height:119px;background:#559fe6;border:2.8px solid #c41d2d"></div>
<div class="t" style="left:22px;transform-origin:0 0;top:74.58px;font-size:41.70px;color:#c5d9ef;transform:scale(0.2933,0.3333);"><span class="c" style="--F:41.70px;--A:33.58px;--S:0.90px;--D:-3.00px">等待执行的操作</span></div>
<div class="t" style="left:22.6px;transform-origin:0 0;top:95.24px;font-size:36.90px;color:#f2f7fd;transform:scale(0.2867,0.3333);"><span style="font-size:28.80px;letter-spacing:0.30px;-webkit-text-stroke:0.30px #f2f7fd">1.</span><span class="c" style="--F:36.90px;--A:30.00px;--S:1.05px;--D:-3.00px">删除</span><span style="font-size:28.80px;letter-spacing:0.30px;-webkit-text-stroke:0.30px #f2f7fd">(H:)</span><span class="c" style="--F:36.90px;--A:30.00px;--S:1.05px;--D:-3.00px">盘从硬盘</span><span style="font-size:28.80px;letter-spacing:0.30px;-webkit-text-stroke:0.30px #f2f7fd">3</span><span class="c" style="--F:36.90px;--A:30.00px;--S:1.05px;--D:-3.00px">上</span></div>
<div class="t" style="left:22.6px;transform-origin:0 0;top:113.54px;font-size:36.90px;color:#f2f7fd;transform:scale(0.2867,0.3333);"><span style="font-size:28.80px;letter-spacing:0.30px;-webkit-text-stroke:0.30px #f2f7fd">2.</span><span class="c" style="--F:36.90px;--A:30.00px;--S:1.05px;--D:-3.00px">调整分区</span><span style="font-size:28.80px;letter-spacing:0.30px;-webkit-text-stroke:0.30px #f2f7fd">(G:)</span><span class="c" style="--F:36.90px;--A:30.00px;--S:1.05px;--D:-3.00px">的大小在硬盘</span><span style="font-size:28.80px;letter-spacing:0.30px;-webkit-text-stroke:0.30px #f2f7fd">2</span><span class="c" style="--F:36.90px;--A:30.00px;--S:1.05px;--D:-3.00px">上</span></div>
<div class="t" style="left:22.6px;transform-origin:0 0;top:131.84px;font-size:36.90px;color:#f2f7fd;transform:scale(0.2867,0.3333);"><span style="font-size:28.80px;letter-spacing:0.30px;-webkit-text-stroke:0.30px #f2f7fd">3.</span><span class="c" style="--F:36.90px;--A:30.00px;--S:1.05px;--D:-3.00px">创建</span><span style="font-size:28.80px;letter-spacing:0.30px;-webkit-text-stroke:0.30px #f2f7fd">(H:)</span><span class="c" style="--F:36.90px;--A:30.00px;--S:1.05px;--D:-3.00px">在硬盘</span><span style="font-size:28.80px;letter-spacing:0.30px;-webkit-text-stroke:0.30px #f2f7fd">2</span><span class="c" style="--F:36.90px;--A:30.00px;--S:1.05px;--D:-3.00px">上</span></div>
<div class="t" style="left:22.6px;transform-origin:0 0;top:150.14px;font-size:36.90px;color:#f2f7fd;transform:scale(0.2867,0.3333);"><span style="font-size:28.80px;letter-spacing:0.30px;-webkit-text-stroke:0.30px #f2f7fd">4.</span><span class="c" style="--F:36.90px;--A:30.00px;--S:1.05px;--D:-3.00px">调整分区</span><span style="font-size:28.80px;letter-spacing:0.30px;-webkit-text-stroke:0.30px #f2f7fd">(H:)</span><span class="c" style="--F:36.90px;--A:30.00px;--S:1.05px;--D:-3.00px">的大小在硬盘</span><span style="font-size:28.80px;letter-spacing:0.30px;-webkit-text-stroke:0.30px #f2f7fd">2</span><span class="c" style="--F:36.90px;--A:30.00px;--S:1.05px;--D:-3.00px">上</span></div>
<div class="t" style="left:22.6px;transform-origin:0 0;top:168.44px;font-size:36.90px;color:#f2f7fd;transform:scale(0.2867,0.3333);"><span style="font-size:28.80px;letter-spacing:0.30px;-webkit-text-stroke:0.30px #f2f7fd">5.</span><span class="c" style="--F:36.90px;--A:30.00px;--S:1.05px;--D:-3.00px">移动</span><span style="font-size:28.80px;letter-spacing:0.30px;-webkit-text-stroke:0.30px #f2f7fd">(H:)</span><span class="c" style="--F:36.90px;--A:30.00px;--S:1.05px;--D:-3.00px">分区在硬盘</span><span style="font-size:28.80px;letter-spacing:0.30px;-webkit-text-stroke:0.30px #f2f7fd">2</span><span class="c" style="--F:36.90px;--A:30.00px;--S:1.05px;--D:-3.00px">上</span></div>
<svg class="a" style="left:0;top:0" width="900" height="574"><g transform="translate(17,193.3)"><circle cx="6.3" cy="4.6" r="4.4" fill="#2f6fc6"/><path d="M6,0.5 l2,3 l-2.5,4 M8,3.5 l2.5,1.5" stroke="#a8d0f5" stroke-width="0.8" fill="none"/><path d="M0.5,8.3 h6.5" stroke="#fff" stroke-width="3"/><path d="M0.8,8.3 h6 M0.8,8.3 l1.7,-1.7 M0.8,8.3 l1.7,1.7 M6.8,8.3 l-1.7,-1.7 M6.8,8.3 l-1.7,1.7" stroke="#2f6fc6" stroke-width="1.3" fill="none"/></g><g transform="translate(17,214.3)"><rect x="1" y="0.5" width="6" height="5.5" fill="#2f6fc6"/><rect x="2.5" y="2" width="3" height="2.5" fill="#9cc0ec"/><rect x="4" y="3.5" width="6.5" height="6" fill="#2f6fc6"/><rect x="5.5" y="5" width="3.5" height="3" fill="#3f86dc"/></g><g transform="translate(17,235.3)"><path d="M1,9.2 L10.3,1.3" stroke="#2f6fc6" stroke-width="2.6" stroke-linecap="round"/><path d="M4.3,4.2 L7,7.4" stroke="#fff" stroke-width="0.9"/></g><g transform="translate(17,256.3)"><circle cx="5.5" cy="5" r="3.9" fill="none" stroke="#2f6fc6" stroke-width="1.6"/><path d="M5.5,1.1 v3.9 h3.9 a3.9,3.9 0 0 0 -3.9,-3.9 z" fill="#2f6fc6"/></g><g transform="translate(17,277.3)"><circle cx="5.8" cy="5" r="4.5" fill="#2f6fc6"/><path d="M3,1.5 l2.5,3.5 l-2,3" stroke="#fff" stroke-width="0.9" fill="none"/></g><g transform="translate(17,298.3)"><circle cx="6.2" cy="4.6" r="4.3" fill="#2f6fc6"/><path d="M5,1 l1.5,3.5 l3,-1" stroke="#fff" stroke-width="0.8" fill="none"/><path d="M2.5,6.5 v4 M0.5,8.5 h4" stroke="#fff" stroke-width="2.4"/><path d="M2.5,6.8 v3.4 M0.8,8.5 h3.4" stroke="#2f6fc6" stroke-width="1.2"/></g><g transform="translate(17,319.3)"><path d="M1.5,1.8 h8 M4,1.8 v-1.2 h3 v1.2" stroke="#2f6fc6" stroke-width="1.2" fill="none"/><rect x="2" y="3" width="7" height="6.5" fill="#2f6fc6"/><path d="M4,4.5 v3.5 M5.5,4.5 v3.5 M7,4.5 v3.5" stroke="#fff" stroke-width="0.7"/></g><g transform="translate(17,340.3)"><circle cx="6" cy="4.8" r="4.5" fill="#2f6fc6"/><path d="M6,0.3 v4.5 l3.5,2.5 M6,4.8 l-4.5,0" stroke="#fff" stroke-width="0.8" fill="none"/><circle cx="2.6" cy="7.6" r="2" fill="#fff" stroke="#2f6fc6" stroke-width="0.9"/></g><g transform="translate(17,361.3)"><path d="M0.8,5 L5,0.8 h4.8 v4.6 L5.4,9.6 Z" fill="#2f6fc6"/><circle cx="7.8" cy="2.8" r="0.9" fill="#fff"/></g><g transform="translate(17,382.3)"><path d="M5.5,0.5 v4" stroke="#2f6fc6" stroke-width="1.3"/><path d="M2.5,4.5 h6 l2,5 h-10 z" fill="#2f6fc6"/><path d="M3.5,7 v2.5 M5.5,7 v2.5 M7.5,7 v2.5" stroke="#fff" stroke-width="0.5"/></g><g transform="translate(17,403.3)"><path d="M1,9.5 l0.8,-3 l6,-6 l2.4,2.4 l-6,6 z" fill="#2f6fc6"/><path d="M2.3,6.8 l1.4,1.4" stroke="#fff" stroke-width="0.7"/></g><g transform="translate(17,424.3)"><path d="M0.8,3.5 c2.5,3 7,3 9.4,0" stroke="#2f6fc6" stroke-width="1.2" fill="none"/><path d="M2,5 l-1.2,1.8 M5.5,6 v2 M9,5 l1.2,1.8" stroke="#2f6fc6" stroke-width="1.1"/></g><g transform="translate(17,445.3)"><path d="M6.5,1.2 h-5.3 v8 h8 v-4" stroke="#2f6fc6" stroke-width="1.5" fill="none"/><path d="M4,5.5 l1.6,1.6 l4.5,-5.8" stroke="#2f6fc6" stroke-width="1.4" fill="none"/><path d="M3,8.5 h5" stroke="#2f6fc6" stroke-width="1.2"/></g><g transform="translate(17,466.3)"><path d="M1.5,5 v-1.5 a1.5,1.5 0 0 1 1.5,-1.5 h6.5 M8,0.5 l1.8,1.5 l-1.8,1.5 M9.5,5 v1.5 a1.5,1.5 0 0 1 -1.5,1.5 h-6.5 M3,6.5 l-1.8,1.5 l1.8,1.5" stroke="#2f6fc6" stroke-width="1.3" fill="none"/></g><g transform="translate(17,487.3)"><path d="M1.2,1 v8 M3.5,1 h2.5 c2.6,0 4,1.6 4,4 c0,2.4 -1.4,4 -4,4 h-2.5 z" stroke="#2f6fc6" stroke-width="1.4" fill="none"/></g><g transform="translate(17,508.3)"><rect x="0.7" y="2" width="10" height="6" fill="none" stroke="#2f6fc6" stroke-width="1.2"/><path d="M2.5,3.5 v3 M4.5,3.5 h1.5 v1.5 h-1.5 v1.5 h1.5 M7.5,3.5 h1.5 v3 h-1.5 M7.5,5 h1.5" stroke="#2f6fc6" stroke-width="0.8" fill="none"/></g><g transform="translate(17,529.3)"><path d="M1.5,0.5 v9" stroke="#2f6fc6" stroke-width="1.8"/><path d="M3,3 h7 M3,6.5 h4.5" stroke="#2f6fc6" stroke-width="1.8"/></g><g transform="translate(17,550.3)"><circle cx="5.5" cy="5" r="4.4" fill="none" stroke="#2f6fc6" stroke-width="1.2"/><path d="M5.5,4.3 v3.3" stroke="#2f6fc6" stroke-width="1.4"/><circle cx="5.5" cy="2.7" r="0.8" fill="#2f6fc6"/></g></svg>
<svg class="a" style="left:0;top:0" width="900" height="574" viewBox="0 0 900 574" fill="none" stroke="#ffffff" stroke-width="1.15" stroke-linecap="round" stroke-linejoin="round">
<polyline points="27,36.5 31.5,41 40,32.5"/>
<path d="M47.5,33.5 l2,2 l2,-2 z" fill="#fff" stroke="none"/>
<circle cx="83.4" cy="36.7" r="9.3"/>
<path d="M79.6,32.9 l7.6,7.6 M87.2,32.9 l-7.6,7.6"/>
<path d="M124,31.2 h8 a6.2,6.2 0 0 1 0,12.4 h-6"/>
<path d="M120.5,31.2 l4,-3 v6 z" fill="#ffffff"/>
<g stroke="#86bdf0"><path d="M180.5,31 h-8 a6.2,6.2 0 0 0 0,12.4 h6"/><path d="M184.5,31 l-4,-3 v6 z" fill="#86bdf0"/></g>
<path d="M227.3,28.3 h14.8 l2,11.5 h-18.8 z"/>
<rect x="224.8" y="39.8" width="19.3" height="5.3" rx="0.5"/>
<path d="M229,33.2 h5.5 v-1.6 l4.5,3 l-4.5,3 v-1.6 h-5.5 z" stroke-width="1.1"/>
<path d="M287.3,28.3 h14.8 l2,11.5 h-18.8 z"/>
<rect x="284.8" y="39.8" width="19.3" height="5.3" rx="0.5"/>
<path d="M291.5,36.5 l5,-5.5 l3,2.5 l-5,5.5 z" stroke-width="1.1"/>
<circle cx="359.6" cy="35.8" r="9.3"/>
<path d="M359.6,26.5 v9.8 h9.3"/>
<path d="M431.4,27.3 c3,2 5.5,2.3 8.5,2.3 v6.5 c0,5 -4,8 -8.5,9.6 c-4.5,-1.6 -8.5,-4.6 -8.5,-9.6 v-6.5 c3,0 5.5,-0.3 8.5,-2.3 z"/>
<path d="M431.4,31.2 v10.4 M426.2,36.1 h10.4"/>
<rect x="487" y="27.2" width="16.5" height="17.2" rx="1"/>
<path d="M490.5,27.5 v4.5 l1.8,-1.3 l1.8,1.3 v-4.5" stroke-width="1.1"/>
<path d="M490.5,41.3 h13" stroke-width="2"/>
<path d="M562,29 a10,10 0 1 0 3.5,5"/>
<path d="M559.5,26.3 l3.8,2 l-2.5,3.3" />
<ellipse cx="555.3" cy="32.8" rx="4.4" ry="1.6"/>
<path d="M550.9,32.8 v6 c0,1 2,1.7 4.4,1.7 c2.4,0 4.4,-0.7 4.4,-1.7 v-6 M550.9,35.8 c0,1 2,1.7 4.4,1.7 c2.4,0 4.4,-0.7 4.4,-1.7"/>
<path d="M609,43.5 l-7.8,-7.6 c-2.6,-2.6 -1.8,-6.8 1.5,-7.1 c2.6,-0.3 4.8,1.3 6.3,3.2 c1.5,-1.9 3.7,-3.5 6.3,-3.2 c3.3,0.3 4.1,4.5 1.5,7.1 z"/>
<g stroke-linecap="round"><path d="M875.5,34.5 L883.8,42.8" stroke="#fff" stroke-width="5"/><circle cx="874.2" cy="33.2" r="4.8" fill="#fff" stroke="none"/><path d="M875.5,34.5 L883.8,42.8" stroke="#2f8ae0" stroke-width="2.6"/><circle cx="874.2" cy="33.2" r="3.5" fill="#2f8ae0" stroke="none"/><path d="M874.2,33.2 L869.5,28.5" stroke="#2f8ae0" stroke-width="3.4"/><circle cx="883.3" cy="42.3" r="0.9" stroke="#fff" stroke-width="0.9"/></g>
<path d="M808.5,9.5 a5,5 0 0 0 -9,1 M800,15 a5,5 0 0 0 9,-1" stroke-width="1.2"/>
<path d="M806.5,9 l2.3,0.8 l0.3,-2.5 M801.5,15.5 l-2.3,-0.8 l-0.3,2.5" stroke-width="1.1"/>
<path d="M821,8 h10 M821,11.5 h10 M821,15 h10" stroke-width="1.2"/>
<path d="M842,15.2 h10" stroke-width="1.2"/>
<rect x="862.8" y="7.2" width="9" height="8.3" stroke-width="1.2" stroke-linecap="butt"/>
<path d="M885,7 l8,8 M893,7 l-8,8" stroke-width="1.2"/>
<path d="M570.5,74 l3,3 l-3,3 M574.5,74 l3,3 l-3,3" stroke="#3a7fd0" stroke-width="1"/>
<g stroke="#8c9db3" stroke-width="1" stroke-linecap="butt"><rect x="872.5" y="69.5" width="4" height="4"/><rect x="872.5" y="75.5" width="4" height="4"/><path d="M878,70.5 h4 M878,72.5 h2.5 M878,76.5 h4 M878,78.5 h2.5"/></g>
<g stroke="#333" stroke-width="1.3"><path d="M890.5,71.5 l2.5,-2.5 l2.5,2.5"/><path d="M890.5,309.5 l2.5,2.5 l2.5,-2.5"/><path d="M156,561.5 l2.5,2.5 l2.5,-2.5"/></g>
<path d="M529,319 h1 M532,319 h1 M535,319 h1 M538,319 h1" stroke="#9aa5b5" stroke-width="1" stroke-linecap="butt"/>
</svg>
<div class="a" style="left:9.5px;top:21.5px;width:48.8px;height:41px;border:2.8px solid #c41d2d"></div>
<div class="a" style="left:0px;top:64px;width:1px;height:510px;background:#4a6a80;"></div>
<div class="a" style="left:899px;top:64px;width:1px;height:510px;background:#4a6a80;"></div>
<div class="a" style="left:0px;top:573px;width:900px;height:1px;background:#4a6a80;"></div>
<div class="a" style="left:0px;top:0px;width:1px;height:64px;background:#2468b5;"></div>
<div class="a" style="left:899px;top:0px;width:1px;height:64px;background:#2468b5;"></div><script>(function(){var e=document.createElement("span");e.style.cssText="position:absolute;left:-9999px;top:0;font:100px \"Liberation Sans\",sans-serif;white-space:nowrap";e.textContent="\u5206\u533a";document.body.appendChild(e);var w=e.getBoundingClientRect().width;document.body.removeChild(e);if(w>180){var r=document.documentElement.style;r.setProperty("--k","0.84");r.setProperty("--w","1");r.setProperty("--s","0.3");r.setProperty("--v","0.2");}})();</script></body></html>
